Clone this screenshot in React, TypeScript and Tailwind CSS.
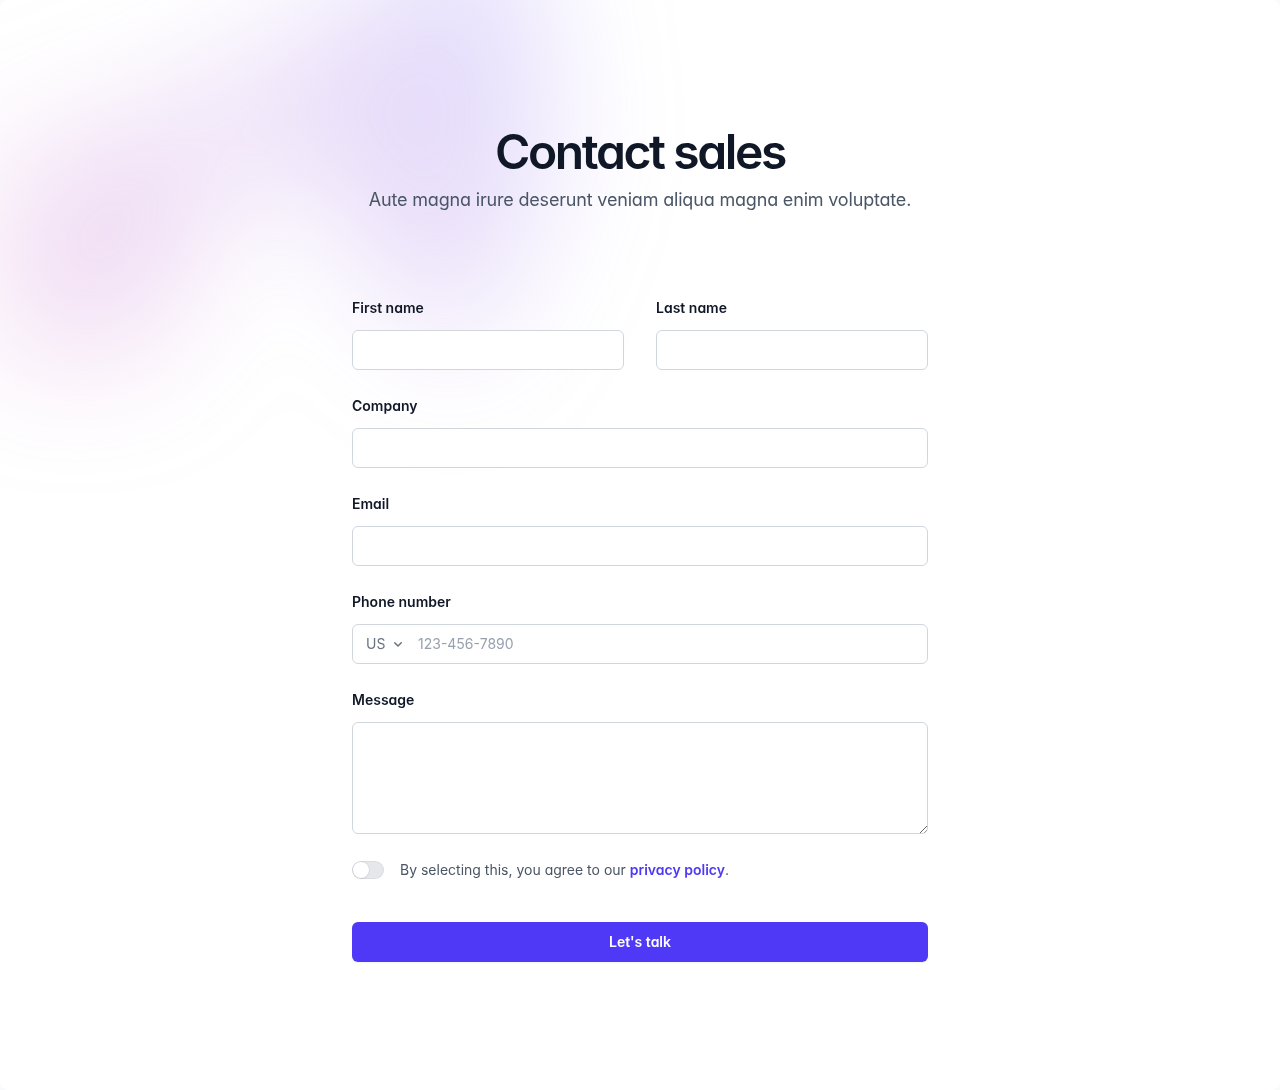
import { useState } from "react";

function Field({ label, id, type = "text", full = false }: { label: string; id: string; type?: string; full?: boolean }) {
  return (
    <div className={full ? "col-span-2" : ""}>
      <label htmlFor={id} className="block text-sm/6 font-semibold text-gray-900">
        {label}
      </label>
      <div className="mt-2.5">
        <input
          id={id}
          type={type}
          className="block w-full rounded-md bg-white px-3.5 py-2 text-sm/6 text-gray-900 outline-1 -outline-offset-1 outline-gray-300 placeholder:text-gray-400 focus:outline-2 focus:-outline-offset-2 focus:outline-indigo-600"
        />
      </div>
    </div>
  );
}

export default function App() {
  const [agreed, setAgreed] = useState(false);

  return (
    <div className="bg-gray-50 font-['Inter',sans-serif] [font-feature-settings:'cv11']">
      <div className="isolate relative min-h-[1090px] overflow-hidden rounded-lg bg-white px-8 py-32">
        {/* decorative blob */}
        <div aria-hidden="true" className="absolute inset-x-0 -top-80 -z-10 transform-gpu overflow-hidden blur-3xl">
          <div className="relative left-[calc(50%-40rem)] -z-10 aspect-[1155/678] w-[1155px] max-w-none -translate-x-1/2 rotate-[30deg] bg-gradient-to-tr from-[#ff80b5] to-[#9089fc] opacity-30 [clip-path:polygon(74.1%_44.1%,100%_61.6%,97.5%_26.9%,85.5%_0.1%,80.7%_2%,72.5%_32.5%,60.2%_62.4%,52.4%_68.1%,47.5%_58.3%,45.2%_34.5%,27.5%_76.7%,0.1%_64.9%,17.9%_100%,27.6%_76.8%,76.1%_97.7%,74.1%_44.1%)]" />
        </div>

        <div className="mx-auto max-w-2xl text-center">
          <h2 className="text-5xl font-semibold tracking-tighter text-gray-900">Contact sales</h2>
          <p className="mt-2 text-lg/8 tracking-[-0.01em] text-gray-600">
            Aute magna irure deserunt veniam aliqua magna enim voluptate.
          </p>
        </div>

        <form className="mx-auto mt-20 max-w-xl" onSubmit={(e) => e.preventDefault()}>
          <div className="grid grid-cols-2 gap-x-8 gap-y-6">
            <Field label="First name" id="first-name" />
            <Field label="Last name" id="last-name" />
            <Field label="Company" id="company" full />
            <Field label="Email" id="email" type="email" full />

            <div className="col-span-2">
              <label htmlFor="phone-number" className="block text-sm/6 font-semibold text-gray-900">
                Phone number
              </label>
              <div className="mt-2.5">
                <div className="flex rounded-md bg-white outline-1 -outline-offset-1 outline-gray-300">
                  <div className="grid shrink-0 grid-cols-1">
                    <select
                      id="country"
                      className="col-start-1 row-start-1 w-full appearance-none rounded-md bg-transparent py-2 pr-7 pl-3.5 text-sm/6 text-gray-500"
                    >
                      <option>US</option>
                      <option>CA</option>
                      <option>EU</option>
                    </select>
                    <svg
                      viewBox="0 0 16 16"
                      fill="currentColor"
                      aria-hidden="true"
                      className="pointer-events-none col-start-1 row-start-1 mr-2 size-4 self-center justify-self-end text-gray-500"
                    >
                      <path
                        fillRule="evenodd"
                        clipRule="evenodd"
                        d="M4.22 6.22a.75.75 0 0 1 1.06 0L8 8.94l2.72-2.72a.75.75 0 1 1 1.06 1.06l-3.25 3.25a.75.75 0 0 1-1.06 0L4.22 7.28a.75.75 0 0 1 0-1.06Z"
                      />
                    </svg>
                  </div>
                  <input
                    id="phone-number"
                    type="text"
                    placeholder="123-456-7890"
                    className="block min-w-0 grow bg-transparent py-2 pr-3 pl-1 text-sm/6 text-gray-900 placeholder:text-gray-400 focus:outline-none"
                  />
                </div>
              </div>
            </div>

            <div className="col-span-2">
              <label htmlFor="message" className="block text-sm/6 font-semibold text-gray-900">
                Message
              </label>
              <div className="mt-2.5">
                <textarea
                  id="message"
                  rows={4}
                  className="block w-full rounded-md bg-white px-3.5 py-2 text-sm/6 text-gray-900 outline-1 -outline-offset-1 outline-gray-300 focus:outline-2 focus:-outline-offset-2 focus:outline-indigo-600"
                />
              </div>
            </div>

            <div className="col-span-2 flex gap-x-4">
              <div className="flex h-6 items-center">
                <button
                  type="button"
                  onClick={() => setAgreed(!agreed)}
                  className={`relative inline-flex w-8 shrink-0 rounded-full p-px ring-1 ring-inset ring-gray-900/5 transition-colors ${agreed ? "bg-indigo-600" : "bg-gray-200"}`}
                >
                  <span
                    className={`size-4 rounded-full bg-white shadow-xs ring-1 ring-gray-900/5 transition-transform ${agreed ? "translate-x-3.5" : "translate-x-0"}`}
                  />
                </button>
              </div>
              <label className="text-sm/6 text-gray-600">
                By selecting this, you agree to our{" "}
                <a href="#" className="font-semibold text-indigo-600">
                  privacy&nbsp;policy
                </a>
                .
              </label>
            </div>
          </div>

          <div className="mt-10">
            <button
              type="submit"
              className="block w-full rounded-md bg-indigo-600 px-3.5 py-2.5 text-center text-sm font-semibold text-white shadow-xs hover:bg-indigo-500"
            >
              Let's talk
            </button>
          </div>
        </form>
      </div>
    </div>
  );
}
